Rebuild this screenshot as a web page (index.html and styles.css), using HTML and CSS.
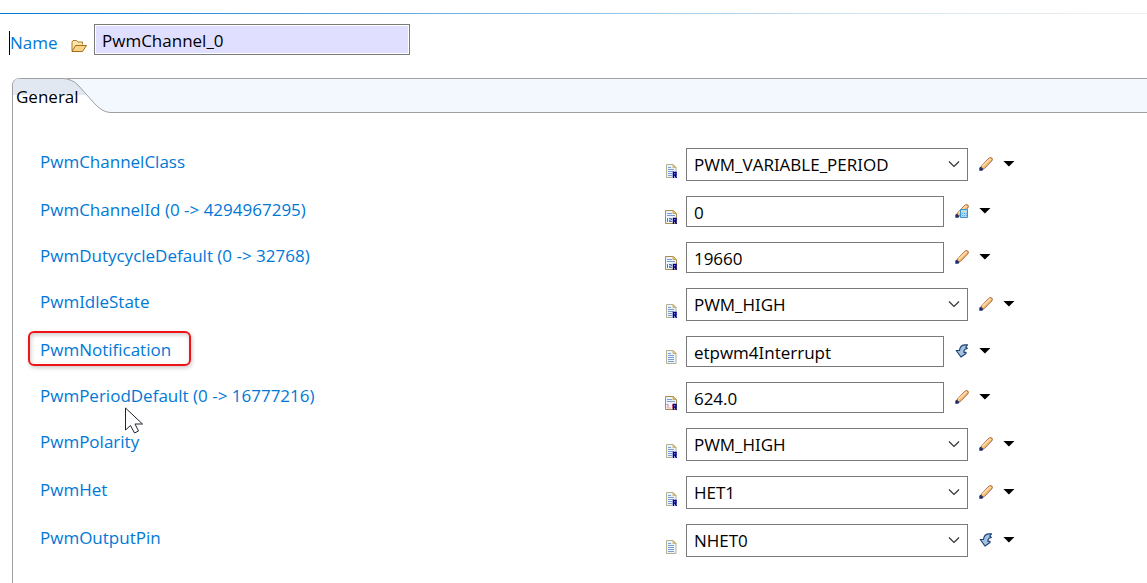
FILE: index.html
```html
<!DOCTYPE html>
<html lang="en">
<head>
  <meta charset="UTF-8" />
  <meta name="viewport" content="width=device-width, initial-scale=1" />
  <title>PwmChannel_0</title>
  <link rel="stylesheet" href="styles.css">
</head>
<body>
  <!-- icons shared by the rows -->
  <svg class="sprite" aria-hidden="true">
    <symbol id="doc" viewBox="0 0 12 14">
      <path d="M1.500 .5h6.500l3 3v10h-9.500z" fill="#eef4fc" stroke="#b4b096" />
      <path d="M8 .5v3h3z" fill="#e8cf8a" stroke="#c8b070" />
      <path d="M3 3.500h3M3 5.500h6M3 7.500h6M3 9.500h6M3 11.500h6" stroke="#7a9ccf" />
    </symbol>
    <symbol id="letter-r" viewBox="0 0 12 14">
      <path d="M8.500 14V8.500H11v2.500H8.500M10 11l1.500 3" fill="none" stroke="#00008c" stroke-width="1.500" />
    </symbol>
    <symbol id="doc-ref" viewBox="0 0 12 14">
      <use href="#doc" />
      <path d="M7 8h5v6h-5z" fill="#d4e2f6" />
      <use href="#letter-r" />
    </symbol>
    <symbol id="doc-int" viewBox="0 0 12 14">
      <path d="M.5 .5h8l3 3v10h-11z" fill="#eef4fc" stroke="#a88e48" />
      <path d="M8 .5v3h3z" fill="#e8cf8a" stroke="#c8a850" />
      <path d="M2 3.500h5M2 5.500h8" stroke="#7a9ccf" />
      <path d="M2.500 8v4M4 8.500h2.500v1.500h-2v1.500H7" fill="none" stroke="#5578ac" />
      <use href="#letter-r" />
    </symbol>
    <symbol id="doc-float" viewBox="0 0 12 14">
      <path d="M.5 .5h8l3 3v10h-11z" fill="#eef4fc" stroke="#a88e48" />
      <path d="M8 .5v3h3z" fill="#e8cf8a" stroke="#c8a850" />
      <path d="M2 3.500h5M2 5.500h8" stroke="#7a9ccf" />
      <path d="M1.500 8.500h1.500v4M5 11.500v1M7.500 8v4.500" fill="none" stroke="#ff7272" />
      <use href="#letter-r" />
    </symbol>
    <symbol id="pencil" viewBox="0 0 14 14">
      <path d="M1.500 12l1-3L9.800 1.300q1.700-1.500 3-.300 1.300 1.300-.100 3L5 11.800z" fill="#f6bc74" stroke="#a8683a" />
      <path d="M3.500 9.300l7.800-7.600" stroke="#ffe2b8" stroke-width="1.400" />
      <path d="M.3 13.700v-3l1.500-1 2.500 2.500-1 1.500z" fill="#1c2c6c" />
    </symbol>
    <symbol id="pencil-calc" viewBox="0 0 14 14">
      <use href="#pencil" />
      <path d="M5.500 5.500h7v8h-7z" fill="#a8d8f5" stroke="#3c8fd0" />
      <path d="M7 7.500h4" stroke="#d8e8a0" />
      <path d="M7 9.500h5M7 11.500h5" stroke="#68b0e4" stroke-dasharray="1 1" />
    </symbol>
    <symbol id="arrow" viewBox="0 0 14 14">
      <path d="M12.500 .8H9.500Q5 1.200 4.500 6.500H1.200L6 13 11 9.500V8.300H9Q8.500 5.200 12.300 4.500L10.800 3z" fill="#a4c2e0" stroke="#1f4478" stroke-width="1.200" stroke-linejoin="round" />
    </symbol>
  </svg>

  <header class="name-bar">
    <label class="name-label" for="name">Name</label>
    <svg class="folder" viewBox="0 0 16 12" aria-hidden="true">
      <path d="M1 11V2l1-1.500h3.500L7 2h4.500v2.500" fill="#fbe5ae" stroke="#b07820" />
      <path d="M1 11.500l3.500-6h11l-4 6z" fill="#f8d488" stroke="#a86c14" stroke-linejoin="round" />
    </svg>
    <input class="name-input" id="name" type="text" value="PwmChannel_0">
  </header>

  <main class="panel">
    <nav class="tabs">
      <button class="tab" type="button">
        <svg class="tab-shape" viewBox="0 0 100 35" aria-hidden="true">
          <path d="M0 0H50Q59 1 65 7L81 25Q89 33 97 34.500V35H0z" fill="#fff" />
          <path d="M0 0H50Q59 1 65 7L74 17H0z" fill="#e1e8f1" />
          <path d="M0 .5H50Q59 1 65 7L81 25Q89 34 97 34.500H100" fill="none" stroke="#a0a0a0" />
        </svg>
        <span class="tab-text">General</span>
      </button>
    </nav>

    <form class="fields">
      <div class="row">
        <label for="class"><span>PwmChannelClass</span></label>
        <svg class="doc"><use href="#doc-ref" /></svg>
        <select id="class"><option>PWM_VARIABLE_PERIOD</option></select>
        <svg class="edit"><use href="#pencil" /></svg>
        <button class="menu" type="button" aria-label="Options"></button>
      </div>
      <div class="row">
        <label for="id"><span>PwmChannelId (0 -&gt; 4294967295)</span></label>
        <svg class="doc"><use href="#doc-int" /></svg>
        <input id="id" type="text" value="0">
        <svg class="edit"><use href="#pencil-calc" /></svg>
        <button class="menu" type="button" aria-label="Options"></button>
      </div>
      <div class="row">
        <label for="duty"><span>PwmDutycycleDefault (0 -&gt; 32768)</span></label>
        <svg class="doc"><use href="#doc-int" /></svg>
        <input id="duty" type="text" value="19660">
        <svg class="edit"><use href="#pencil" /></svg>
        <button class="menu" type="button" aria-label="Options"></button>
      </div>
      <div class="row">
        <label for="idle"><span>PwmIdleState</span></label>
        <svg class="doc"><use href="#doc-ref" /></svg>
        <select id="idle"><option>PWM_HIGH</option></select>
        <svg class="edit"><use href="#pencil" /></svg>
        <button class="menu" type="button" aria-label="Options"></button>
      </div>
      <div class="row">
        <label for="notification"><span class="marked">PwmNotification</span></label>
        <svg class="doc"><use href="#doc" /></svg>
        <input id="notification" type="text" value="etpwm4Interrupt">
        <svg class="edit"><use href="#arrow" /></svg>
        <button class="menu" type="button" aria-label="Options"></button>
      </div>
      <div class="row">
        <label for="period"><span class="pointed">PwmPeriodDefault (0 -&gt; 16777216)
          <svg class="cursor" viewBox="0 0 18 27" aria-hidden="true">
            <path d="M.5 1v22l5-4.500 4 7.500 4-2-3.500-7h7.500z" fill="#fff" stroke="#223" />
          </svg></span></label>
        <svg class="doc"><use href="#doc-float" /></svg>
        <input id="period" type="text" value="624.0">
        <svg class="edit"><use href="#pencil" /></svg>
        <button class="menu" type="button" aria-label="Options"></button>
      </div>
      <div class="row">
        <label for="polarity"><span>PwmPolarity</span></label>
        <svg class="doc"><use href="#doc-ref" /></svg>
        <select id="polarity"><option>PWM_HIGH</option></select>
        <svg class="edit"><use href="#pencil" /></svg>
        <button class="menu" type="button" aria-label="Options"></button>
      </div>
      <div class="row">
        <label for="het"><span>PwmHet</span></label>
        <svg class="doc"><use href="#doc-ref" /></svg>
        <select id="het"><option>HET1</option></select>
        <svg class="edit"><use href="#pencil" /></svg>
        <button class="menu" type="button" aria-label="Options"></button>
      </div>
      <div class="row">
        <label for="pin"><span>PwmOutputPin</span></label>
        <svg class="doc"><use href="#doc" /></svg>
        <select id="pin"><option>NHET0</option></select>
        <svg class="edit"><use href="#arrow" /></svg>
        <button class="menu" type="button" aria-label="Options"></button>
      </div>
    </form>
  </main>
</body>
</html>
```
FILE: styles.css
```css
* {
  box-sizing: border-box;
}
body {
  margin: 0;
  padding-top: 13px;
  min-height: 100vh;
  display: flex;
  flex-direction: column;
  background: #fff;
  color: #000;
  font-family: "Open Sans", "Noto Sans", sans-serif;
  font-size: 17px;
  line-height: 24px;
  font-feature-settings: "ss01", "salt";
}
input, select, button {
  font: inherit;
  font-feature-settings: inherit;
  color: inherit;
}
.sprite {
  position: absolute;
  width: 0;
  height: 0;
}
.name-bar {
  display: flex;
  align-items: flex-start;
  padding: 10px 9px 0;
  border-top: 1px solid #a0a0a0;
  border-image: linear-gradient(to right, #0078d7, #d0e4f0 75%, #f0f0f0) 1;
}
.name-label {
  width: 61px;
  margin-top: 7px;
  border-left: 1px solid #000;
  color: #0078d7;
}
.folder {
  width: 16px;
  height: 12px;
  margin: 16px 7px 0 1px;
}
.name-input {
  width: 316px;
  height: 31px;
  padding: 2px 7px 0;
  border: 1px solid #7a7a7a;
  box-shadow: inset 0 0 0 1px #fff;
  background: #e1dfff;
}
.panel {
  flex: 1;
  margin: 23px 0 0 12px;
  border-left: 1px solid #a0a0a0;
  border-top-left-radius: 8px;
}
.tabs {
  display: flex;
  height: 35px;
  margin-left: -1px;
  border: 1px solid #a0a0a0;
  border-right: none;
  border-top-left-radius: 8px;
  background: #f3f7fe;
}
.tab {
  position: relative;
  width: 100px;
  margin: -1px 0;
  padding: 2px 0 0 3px;
  border: none;
  background: none;
  text-align: left;
}
.tab-shape {
  position: absolute;
  top: 0;
  left: 0;
  width: 100px;
  height: 35px;
  border-top-left-radius: 8px;
}
.tab-text {
  position: relative;
}
.fields {
  display: flex;
  flex-direction: column;
  gap: 15px;
  padding: 35px 0 20px 27px;
}
.row {
  display: flex;
  align-items: center;
}
.row label {
  width: 56%;
  margin-right: 5px;
  align-self: flex-start;
  margin-top: 2px;
  color: #0078d7;
}
.row input, .row select {
  border: 1px solid #7a7a7a;
  border-radius: 0;
  background: #fff;
}
.row input {
  width: 258px;
  height: 31px;
  padding: 2px 7px 0;
}
.row select {
  width: 282px;
  height: 33px;
  padding: 0 7px;
  appearance: none;
  background: #fff url("data:image/svg+xml,%3Csvg xmlns='http://www.w3.org/2000/svg' width='12' height='7'%3E%3Cpath d='M1 .5l5 5 5-5' fill='none' stroke='%23333' stroke-width='1.2'/%3E%3C/svg%3E") no-repeat right 7px center;
}
.doc {
  width: 12px;
  height: 14px;
  margin: 0 9px 3px 0;
  align-self: flex-end;
}
.edit {
  width: 14px;
  height: 14px;
  margin: 0 0 2px 11px;
}
.menu {
  width: 12px;
  height: 6px;
  margin: 0 0 2px 10px;
  padding: 0;
  border: none;
  background: #000;
  clip-path: polygon(0 0, 100% 0, 50% 100%);
}
.marked {
  position: relative;
}
.marked::before {
  content: "";
  position: absolute;
  inset: -7px -20px -5px -12px;
  border: 2px solid #f01418;
  border-radius: 6px;
  box-shadow: 1px 2px 4px rgba(0,0,0,0.2), inset 1px 2px 4px rgba(0,0,0,0.2);
}
.pointed {
  position: relative;
}
.cursor {
  position: absolute;
  top: 23px;
  left: 85px;
  width: 18px;
  height: 27px;
}
```
